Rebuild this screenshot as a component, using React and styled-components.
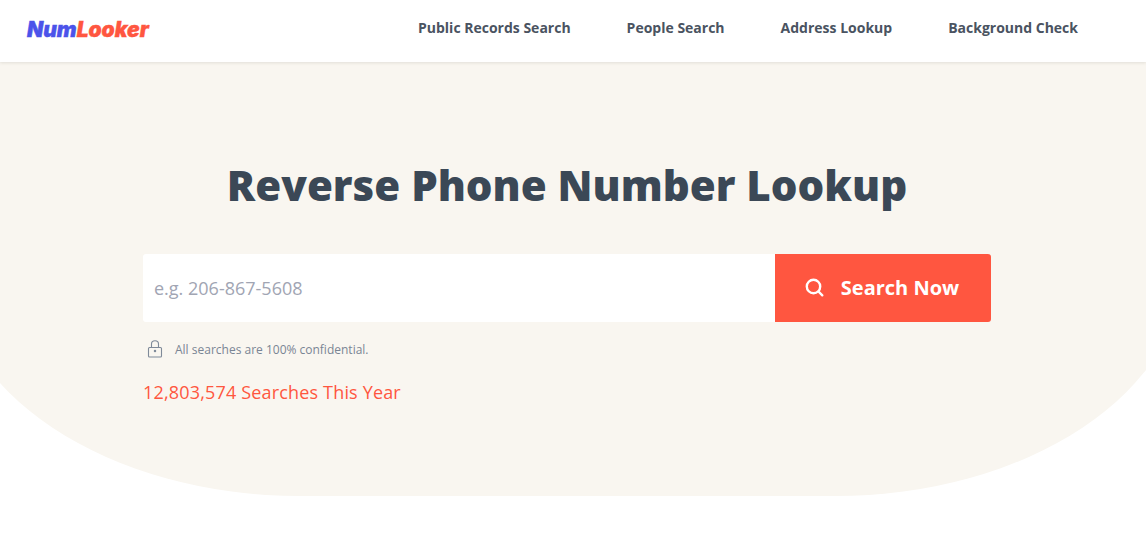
import React from 'react'
import styled, { createGlobalStyle } from 'styled-components'

const GlobalStyle = createGlobalStyle`
    html, body {
        margin: 0;
        padding: 0;
        height: 100%;
        overflow: hidden;
        background: #fff;
        font-family: "Open Sans", "Liberation Sans", sans-serif;
    }
    * { box-sizing: border-box; }
`

const Page = styled.div`
    width: 1134px;
`

const Header = styled.header`
    position: relative;
    z-index: 2;
    width: 1146px;
    height: 62px;
    padding: 0 68px 7px 27px;
    display: flex;
    align-items: center;
    justify-content: space-between;
    background: #fff;
    box-shadow: 0 1px 3px rgba(60, 60, 40, 0.12);
`

const Logo = styled.a`
    font-family: Inter, "Liberation Sans", sans-serif;
    font-size: 21px;
    font-weight: 900;
    font-style: italic;
    padding-top: 3px;
    color: #ff5640;
    -webkit-text-stroke: 0.4px currentColor;
`

const LogoAccent = styled.span`
    color: #4b53ea;
`

const Nav = styled.nav`
    display: flex;
    gap: 56px;
`

const NavLink = styled.a`
    font-size: 14px;
    font-weight: 700;
    color: #4a5361;
`

const Hero = styled.section`
    position: relative;
    height: 434px;
    padding-top: 91px;

    &::before {
        content: '';
        position: absolute;
        top: 0;
        bottom: 0;
        left: -50px;
        right: -51px;
        background: #f9f6f0;
        border-radius: 0 0 350px 350px / 0 0 233px 233px;
    }
`

const HeroInner = styled.div`
    position: relative;
    width: 848px;
    margin: 0 auto;
`

const Title = styled.h1`
    margin: 0 0 37px;
    height: 64px;
    line-height: 64px;
    font-size: 42px;
    font-weight: 800;
    text-align: center;
    color: #3b4856;
`

const SearchForm = styled.form`
    display: flex;
    height: 68px;
    border-radius: 3px;
    overflow: hidden;
`

const PhoneInput = styled.input`
    flex: 1;
    min-width: 0;
    padding: 0 11px;
    border: 0;
    outline: 0;
    background: #fff;
    font-family: inherit;
    font-size: 18px;
    color: #3b4856;

    &::placeholder {
        color: #a1a5b3;
        opacity: 1;
    }
`

const SearchButton = styled.button`
    width: 216px;
    padding: 0 2px 2px 0;
    display: flex;
    align-items: center;
    justify-content: center;
    gap: 17px;
    border: 0;
    background: #ff5640;
    color: #fff;
    font-family: inherit;
    font-size: 20px;
    font-weight: 700;
`

const Confidential = styled.div`
    display: flex;
    align-items: center;
    gap: 12px;
    height: 18px;
    margin: 18px 0 0 4px;
    font-size: 12px;
    color: #7a8594;
`

const Counter = styled.div`
    margin-top: 22px;
    line-height: 25px;
    font-size: 18px;
    font-weight: 500;
    letter-spacing: 0.17px;
    color: #ff5640;
`

const LockIcon = () => (
    <svg width="16" height="18" viewBox="0 0 16 18" fill="none" stroke="#7f8a99" strokeWidth="1.1">
        <rect x="1.5" y="7.5" width="13" height="9.5" rx="1" />
        <path d="M4.5 7.5V4a3.5 3.2 0 0 1 7 0V7.5" />
        <circle cx="8" cy="11" r="0.7" fill="#7f8a99" />
    </svg>
)

const SearchIcon = () => (
    <svg width="19" height="19" viewBox="0 0 19 19" fill="none" stroke="#fff" strokeWidth="2.4" strokeLinecap="round">
        <circle cx="8.5" cy="8.5" r="6.7" />
        <path d="M13.5 13.5L17.3 17.3" />
    </svg>
)

const links = ['Public Records Search', 'People Search', 'Address Lookup', 'Background Check']

export default function App() {
    return (
        <Page>
            <GlobalStyle />
            <Header>
                <Logo><LogoAccent>Num</LogoAccent>Looker</Logo>
                <Nav>
                    {links.map(link => <NavLink key={link}>{link}</NavLink>)}
                </Nav>
            </Header>
            <Hero>
                <HeroInner>
                    <Title>Reverse Phone Number Lookup</Title>
                    <SearchForm>
                        <PhoneInput placeholder="e.g. 206-867-5608" />
                        <SearchButton type="button"><SearchIcon />Search Now</SearchButton>
                    </SearchForm>
                    <Confidential><LockIcon />All searches are 100% confidential.</Confidential>
                    <Counter>12,803,574 Searches This Year</Counter>
                </HeroInner>
            </Hero>
        </Page>
    )
}
